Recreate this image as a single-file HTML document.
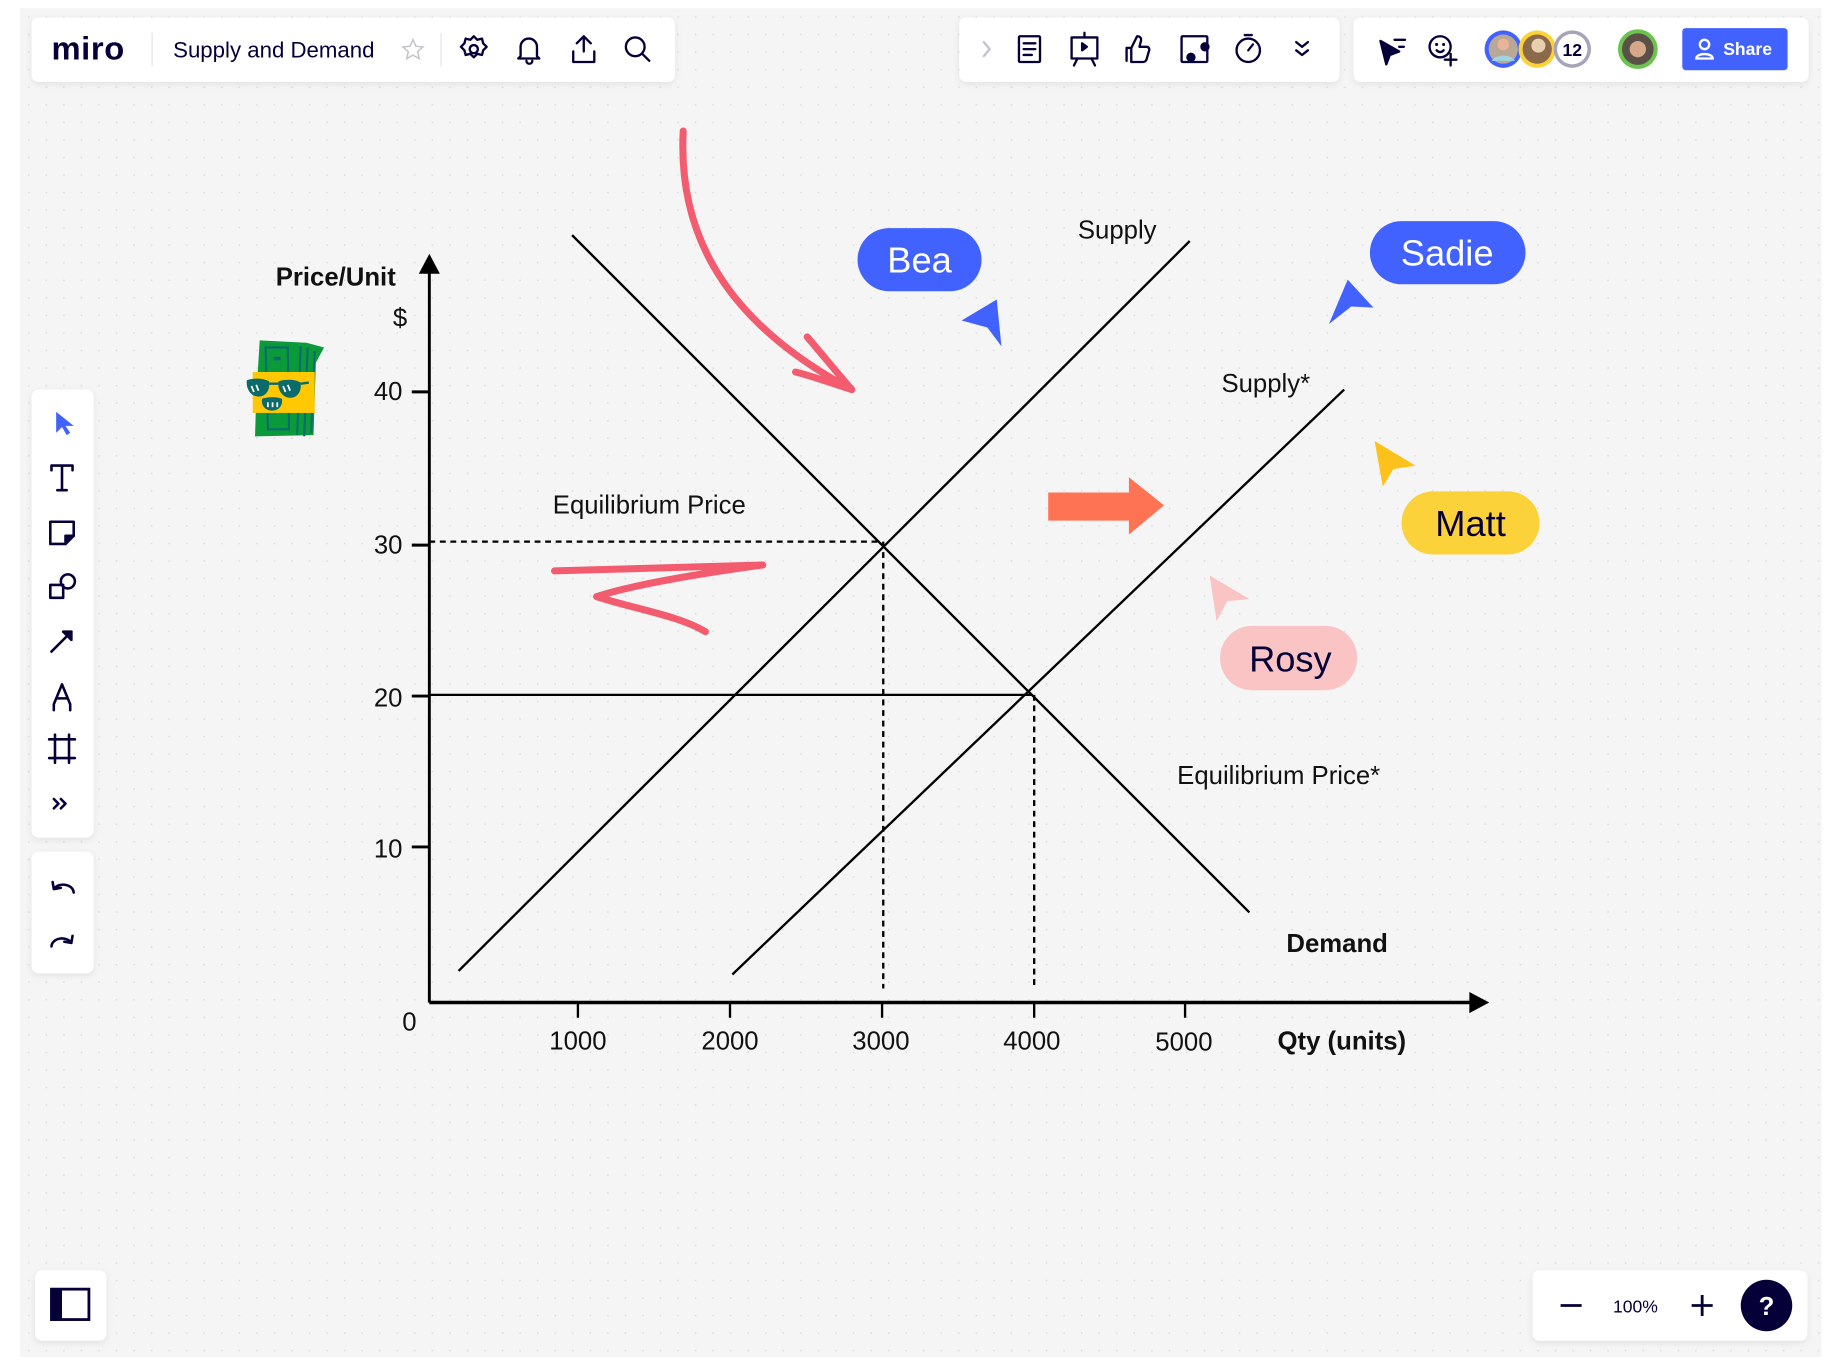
<!DOCTYPE html>
<html><head><meta charset="utf-8"><style>
html,body{margin:0;padding:0;background:#fff;width:1825px;height:1368px;overflow:hidden}
svg{display:block}
text{font-family:"Liberation Sans",sans-serif}
</style></head><body>
<svg width="1825" height="1368" viewBox="0 0 1560 1169.4" preserveAspectRatio="none" xmlns="http://www.w3.org/2000/svg">
<defs>
<pattern id="dots" x="17" y="7" width="15" height="15" patternUnits="userSpaceOnUse"><rect x="7" y="7" width="1.2" height="1.2" fill="#d6d6d8"/></pattern>
<filter id="sh" x="-10%" y="-20%" width="120%" height="150%"><feDropShadow dx="0" dy="2" stdDeviation="3" flood-color="#000" flood-opacity="0.08"/></filter>
</defs>
<rect x="0" y="0" width="1560" height="1170" fill="#fff"/>
<rect x="17" y="7" width="1540" height="1153" fill="#f5f5f5"/>
<rect x="17" y="7" width="1540" height="1153" fill="url(#dots)"/>

<g filter="url(#sh)">
<rect x="27" y="15" width="550" height="55" rx="6" fill="#fff"/>
<rect x="820" y="15" width="325" height="55" rx="6" fill="#fff"/>
<rect x="1157" y="15" width="389" height="55" rx="6" fill="#fff"/>
<rect x="27" y="333" width="53" height="383" rx="6" fill="#fff"/>
<rect x="27" y="728" width="53" height="104" rx="6" fill="#fff"/>
<rect x="30" y="1086" width="61" height="60" rx="6" fill="#fff"/>
<rect x="1310" y="1086" width="235" height="60" rx="6" fill="#fff"/>
</g>
<text x="44" y="51" font-size="28" font-weight="bold" fill="#050038" letter-spacing="0.5">miro</text>
<line x1="130" y1="28" x2="130" y2="57" stroke="#e3e3e8"/>
<text x="148" y="49" font-size="19" fill="#050038">Supply and Demand</text>
<path d="M353 34l2.5 5.5 6 .6-4.5 4 1.3 6-5.3-3-5.3 3 1.3-6-4.5-4 6-.6z" fill="none" stroke="#c3c3cc" stroke-width="1.3"/>
<line x1="377" y1="28" x2="377" y2="57" stroke="#e3e3e8"/>
<g fill="none" stroke="#050038" stroke-width="2" stroke-linecap="round" stroke-linejoin="round">
<path d="M405 31l3 3 4-1 1 4 3 3-3 3-1 4-4-1-3 3-3-3-4 1-1-4-3-3 3-3 1-4 4 1z"/><circle cx="405" cy="42" r="3.5"/>
<path d="M445 48v-8a7 7 0 0 1 14 0v8l2 2h-18zM450 52a2.5 2.5 0 0 0 5 0"/>
<path d="M499 44V31M493 37l6-6 6 6M490 44v9h18v-9"/>
<circle cx="543" cy="40" r="8"/><path d="M549 46l6 6"/>
<path d="M841 36l5 6-5 6" stroke="#c3c3cc"/>
<rect x="871" y="31" width="18" height="22" rx="1"/><path d="M875 37h10M875 42h10M875 47h7"/>
<rect x="916" y="32" width="22" height="18"/><path d="M927 28v4M921 50l-3 6M933 50l3 6"/><path d="M925 37l4 3-4 3z" fill="#050038"/>
<path d="M963 52V41h4l5-10c3 0 4 2 3 5l-1 4h6c2 0 3 2 2 4l-2 7c-1 2-2 2-3 2h-10M967 41v12"/>
<rect x="1010" y="31" width="22" height="22" rx="1"/><circle cx="1030" cy="40" r="3" fill="#050038"/><circle cx="1018" cy="49" r="3" fill="#050038"/>
<circle cx="1067" cy="43" r="10"/><path d="M1067 43l4-5M1064 30h6"/>
<path d="M1108 36l5 4 5-4M1108 43l5 4 5-4"/>
<path d="M1180 35l5 20 3-8 8-3z" fill="#050038"/><path d="M1192 34h9M1196 40h4"/>
<circle cx="1231" cy="40" r="9"/><path d="M1228 43c2 2 4 2 6 0"/><path d="M1240 46v10M1235 51h10"/>
</g>
<circle cx="1228" cy="38" r="1.3" fill="#050038"/><circle cx="1234" cy="38" r="1.3" fill="#050038"/>
<circle cx="1285" cy="42" r="16" fill="#4262ff"/><circle cx="1285" cy="42" r="12.5" fill="#b9a898"/><circle cx="1285" cy="38" r="5" fill="#e8b59a"/><path d="M1275 52c3-6 17-6 20 0" fill="#9fd4e0"/>
<circle cx="1314" cy="42" r="16" fill="#fcd23a"/><circle cx="1314" cy="42" r="12.5" fill="#8a6a4a"/><circle cx="1315" cy="39" r="6" fill="#e6d0b0"/>
<circle cx="1344" cy="42" r="16" fill="#a5a4b8"/><circle cx="1344" cy="42" r="13" fill="#fff"/><text x="1344" y="48" font-size="15" font-weight="bold" fill="#050038" text-anchor="middle">12</text>
<circle cx="1400" cy="42" r="17" fill="#6cc34f"/><circle cx="1400" cy="42" r="13.5" fill="#5a5048"/><circle cx="1400" cy="42" r="7" fill="#d4a888"/>
<rect x="1438" y="24" width="90" height="36" rx="3" fill="#4262ff"/>
<circle cx="1457" cy="38" r="4" fill="none" stroke="#fff" stroke-width="2"/><path d="M1450 50c0-5 14-5 14 0z" fill="none" stroke="#fff" stroke-width="2"/>
<text x="1473" y="47" font-size="15" font-weight="bold" fill="#fff">Share</text>

<path d="M48 352l0 18 5-5 4 7 3-2-4-6 7 0z" fill="#4262ff"/>
<g fill="none" stroke="#050038" stroke-width="2.2" stroke-linecap="round" stroke-linejoin="round">
<path d="M44 402v-4h18v4M53 398v21M49 419h8"/>
<path d="M43 446h20v12l-7 7H43z"/><path d="M56 465v-7h7" fill="#050038"/>
<rect x="43" y="500" width="11" height="11"/><circle cx="58" cy="497" r="6"/>
<path d="M44 557l17-17M54 540h7v7" /><path d="M61 540l-6 1 5 5z" fill="#050038"/>
<path d="M46 607v-5l7-17 7 17v5M48 597h10"/>
<path d="M42 632h22M42 648h22M47 628v24M59 628v24"/>
<path d="M46 683l4 4-4 4M52 683l4 4-4 4"/>
<path d="M46 760a9 7 0 0 1 17 3M46 760l-1-6M46 760l6-1"/>
<path d="M61 806a9 7 0 0 0-17 3M61 806l1-6M61 806l-6-1"/>
</g>
<rect x="44" y="1102" width="32" height="26" fill="none" stroke="#050038" stroke-width="2.4"/><rect x="44" y="1102" width="9" height="26" fill="#050038"/>
<path d="M1334 1116h18M1446 1116h18M1455 1107v18" stroke="#050038" stroke-width="2.4"/>
<text x="1398" y="1122" font-size="15" fill="#050038" text-anchor="middle">100%</text>
<circle cx="1510" cy="1116" r="22" fill="#050038"/><text x="1510" y="1124" font-size="22" font-weight="bold" fill="#fff" text-anchor="middle">?</text>

<!-- money sticker -->
<path d="M222 291L262 293L277 297L270 310L268 372L218 373L219 340z" fill="#0a9a3a"/>
<path d="M227 297h19l1 70h-18zM257 296l-3 76M263 297l-3 76M269 300l-3 70" stroke="#0b6b6b" stroke-width="1.8" fill="none"/>
<path d="M234 305h6v3h-6z" fill="#0b6b6b"/>
<rect x="216" y="318" width="53" height="35" fill="#ffc800"/>
<path d="M211 325c6-2 14-2 19 1 1 8-3 13-9 13s-11-6-10-14zM238 326c6-2 14-2 19 1 1 8-3 13-9 13s-11-6-10-14z" fill="#0b6b6b"/>
<path d="M230 328h8M257 328l7-1" stroke="#0b6b6b" stroke-width="2"/>
<path d="M224 341c5-2 13-2 17 0 1 6-3 10-8.5 10s-9.5-4-8.5-10z" fill="#0b6b6b"/>
<path d="M215 330l2 5M219 329l2 5M242 330l2 5M246 329l2 5M229 344v4M233 344v4M237 344v4" stroke="#fff" stroke-width="1.5"/>

<g stroke="#000" fill="none">
<path d="M367 857V228M352 335h15M352 466h15M352 595h15M352 724h15" stroke-width="2.5"/>
<path d="M367 857H1260" stroke-width="3"/>
<path d="M494 857v13M624 857v13M754 857v13M884 857v13M1013 857v13" stroke-width="2"/>
<path d="M489 201L1068 780M392 830L1017 206M626 833L1149 333" stroke-width="2"/>
<path d="M367 594H882" stroke-width="2"/>
<path d="M367 463H754M755 463V845M884 594V845" stroke-width="2" stroke-dasharray="5 4"/>
</g>
<path d="M367 217l-9 17h18z" fill="#000"/>
<path d="M1273 857l-17-9v18z" fill="#000"/>
<g font-size="22" fill="#111">
<text x="344" y="342" text-anchor="end">40</text>
<text x="344" y="473" text-anchor="end">30</text>
<text x="344" y="604" text-anchor="end">20</text>
<text x="344" y="733" text-anchor="end">10</text>
<text x="350" y="881" text-anchor="middle">0</text>
<text x="494" y="897" text-anchor="middle">1000</text>
<text x="624" y="897" text-anchor="middle">2000</text>
<text x="753" y="897" text-anchor="middle">3000</text>
<text x="882" y="897" text-anchor="middle">4000</text>
<text x="1012" y="898" text-anchor="middle">5000</text>
<text x="342" y="279" text-anchor="middle">$</text>
<text x="955" y="204" text-anchor="middle">Supply</text>
<text x="1082" y="335" text-anchor="middle">Supply*</text>
<text x="555" y="439" text-anchor="middle">Equilibrium Price</text>
<text x="1093" y="670" text-anchor="middle">Equilibrium Price*</text>
<text x="287" y="244" text-anchor="middle" font-weight="bold">Price/Unit</text>
<text x="1143" y="814" text-anchor="middle" font-weight="bold">Demand</text>
<text x="1147" y="897" text-anchor="middle" font-weight="bold">Qty (units)</text>
</g>

<path d="M896 421h69v-13l30 24-30 25v-12h-69z" fill="#ff7355"/>
<g fill="none" stroke="#f25c6e" stroke-width="6" stroke-linecap="round" stroke-linejoin="round">
<path d="M584 112C580 190 610 270 728 333"/>
<path d="M690 288C702 302 715 318 728 333C712 328 696 322 680 318"/>
<path d="M474 488C540 486 600 485 652 483C600 490 540 500 510 510C540 520 580 526 603 540"/>
</g>
<rect x="733" y="195" width="106" height="54" rx="27" fill="#4262ff"/>
<text x="786" y="233" font-size="31" fill="#fff" text-anchor="middle">Bea</text>
<rect x="1171" y="189" width="133" height="54" rx="27" fill="#4262ff"/>
<text x="1237" y="227" font-size="31" fill="#fff" text-anchor="middle">Sadie</text>
<rect x="1198" y="420" width="118" height="54" rx="27" fill="#fcd23a"/>
<text x="1257" y="458" font-size="31" fill="#050038" text-anchor="middle">Matt</text>
<rect x="1043" y="535" width="117" height="55" rx="27" fill="#fbc4c4"/>
<text x="1103" y="574" font-size="31" fill="#050038" text-anchor="middle">Rosy</text>
<path d="M822 274L852 256L856 296L844 280z" fill="#4262ff"/>
<path d="M1136 277L1152 239L1174 263L1155 262z" fill="#4262ff"/>
<path d="M1175 377L1210 398L1191 401L1182 416z" fill="#fcc21b"/>
<path d="M1034 492L1068 512L1049 514L1040 531z" fill="#fbc4c4"/>
</svg>
</body></html>
